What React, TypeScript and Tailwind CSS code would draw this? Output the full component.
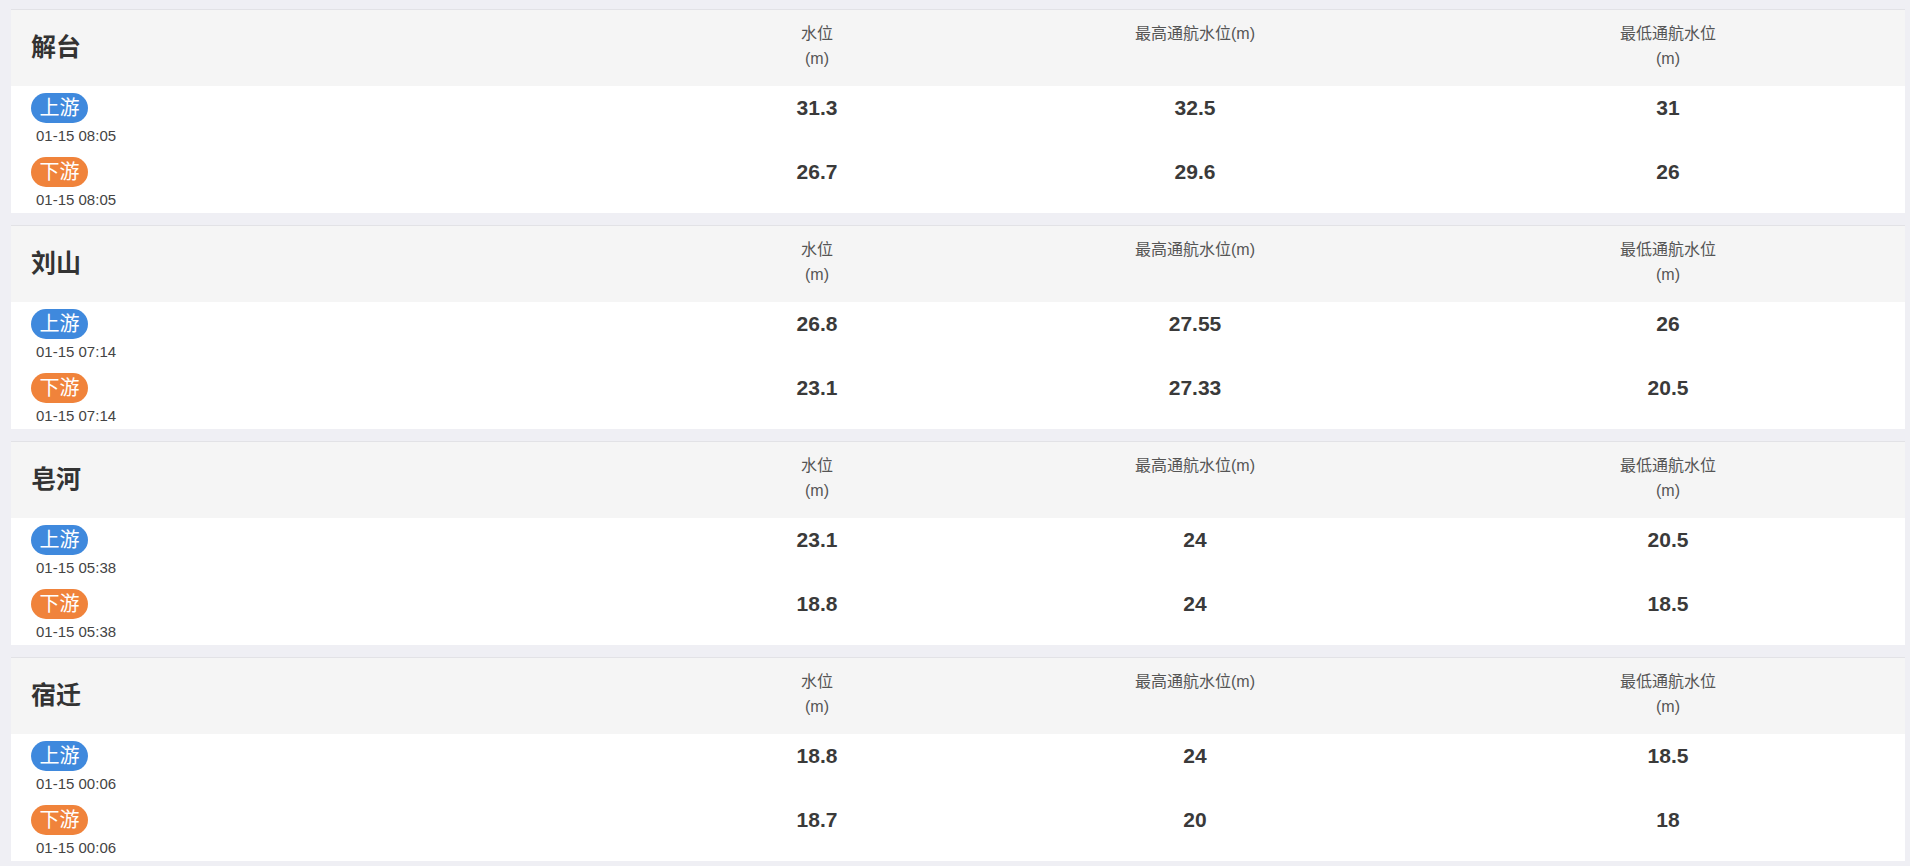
import React from "react";

type Reading = { value: string; high: string; low: string; time: string };
type Station = { name: string; up: Reading; down: Reading };

const stations: Station[] = [
  {
    name: "解台",
    up: { value: "31.3", high: "32.5", low: "31", time: "01-15 08:05" },
    down: { value: "26.7", high: "29.6", low: "26", time: "01-15 08:05" },
  },
  {
    name: "刘山",
    up: { value: "26.8", high: "27.55", low: "26", time: "01-15 07:14" },
    down: { value: "23.1", high: "27.33", low: "20.5", time: "01-15 07:14" },
  },
  {
    name: "皂河",
    up: { value: "23.1", high: "24", low: "20.5", time: "01-15 05:38" },
    down: { value: "18.8", high: "24", low: "18.5", time: "01-15 05:38" },
  },
  {
    name: "宿迁",
    up: { value: "18.8", high: "24", low: "18.5", time: "01-15 00:06" },
    down: { value: "18.7", high: "20", low: "18", time: "01-15 00:06" },
  },
];

const cols = "grid grid-cols-[664px_284px_472px_1fr]";

const Row = ({ label, color, r, first }: { label: string; color: string; r: Reading; first?: boolean }) => (
  <div className={`${cols} ${first ? "pt-[7px]" : "pt-[8px]"}`}>
    <div className="pl-[20px]">
      <span className={`inline-block w-[57px] h-[30px] leading-[30px] rounded-full text-center text-white text-[20px] ${color}`}>
        {label}
      </span>
      <div className="pl-[5px] text-[15px] leading-[26px] text-[#444]">{r.time}</div>
    </div>
    <div className="text-center text-[21px] font-bold leading-[30px] text-[#3a3a3a]">{r.value}</div>
    <div className="text-center text-[21px] font-bold leading-[30px] text-[#3a3a3a]">{r.high}</div>
    <div className="text-center text-[21px] font-bold leading-[30px] text-[#3a3a3a]">{r.low}</div>
  </div>
);

const Card = ({ s }: { s: Station }) => (
  <div className="bg-white border-t border-[#e2e2e6]">
    <div className={`${cols} h-[76px] bg-[#f5f5f5]`}>
      <div className="flex items-center pl-[20px] text-[25px] font-bold text-[#333]">{s.name}</div>
      <div className="pt-[11px] text-center text-[16px] leading-[25px] text-[#555]">
        水位
        <br />
        (m)
      </div>
      <div className="pt-[11px] text-center text-[16px] leading-[25px] text-[#555]">最高通航水位(m)</div>
      <div className="pt-[11px] text-center text-[16px] leading-[25px] text-[#555]">
        最低通航水位
        <br />
        (m)
      </div>
    </div>
    <div className="h-[127px]">
      <Row label="上游" color="bg-[#3f89dd]" r={s.up} first />
      <Row label="下游" color="bg-[#f0833b]" r={s.down} />
    </div>
  </div>
);

export default function App() {
  return (
    <div
      className="min-h-screen bg-[#efeff4] pt-[9px] pb-[5px] pl-[11px] pr-[5px] flex flex-col gap-[12px]"
      style={{ fontFamily: '"Liberation Sans", "Noto Sans CJK SC", sans-serif' }}
    >
      {stations.map((s) => (
        <Card key={s.name} s={s} />
      ))}
    </div>
  );
}
